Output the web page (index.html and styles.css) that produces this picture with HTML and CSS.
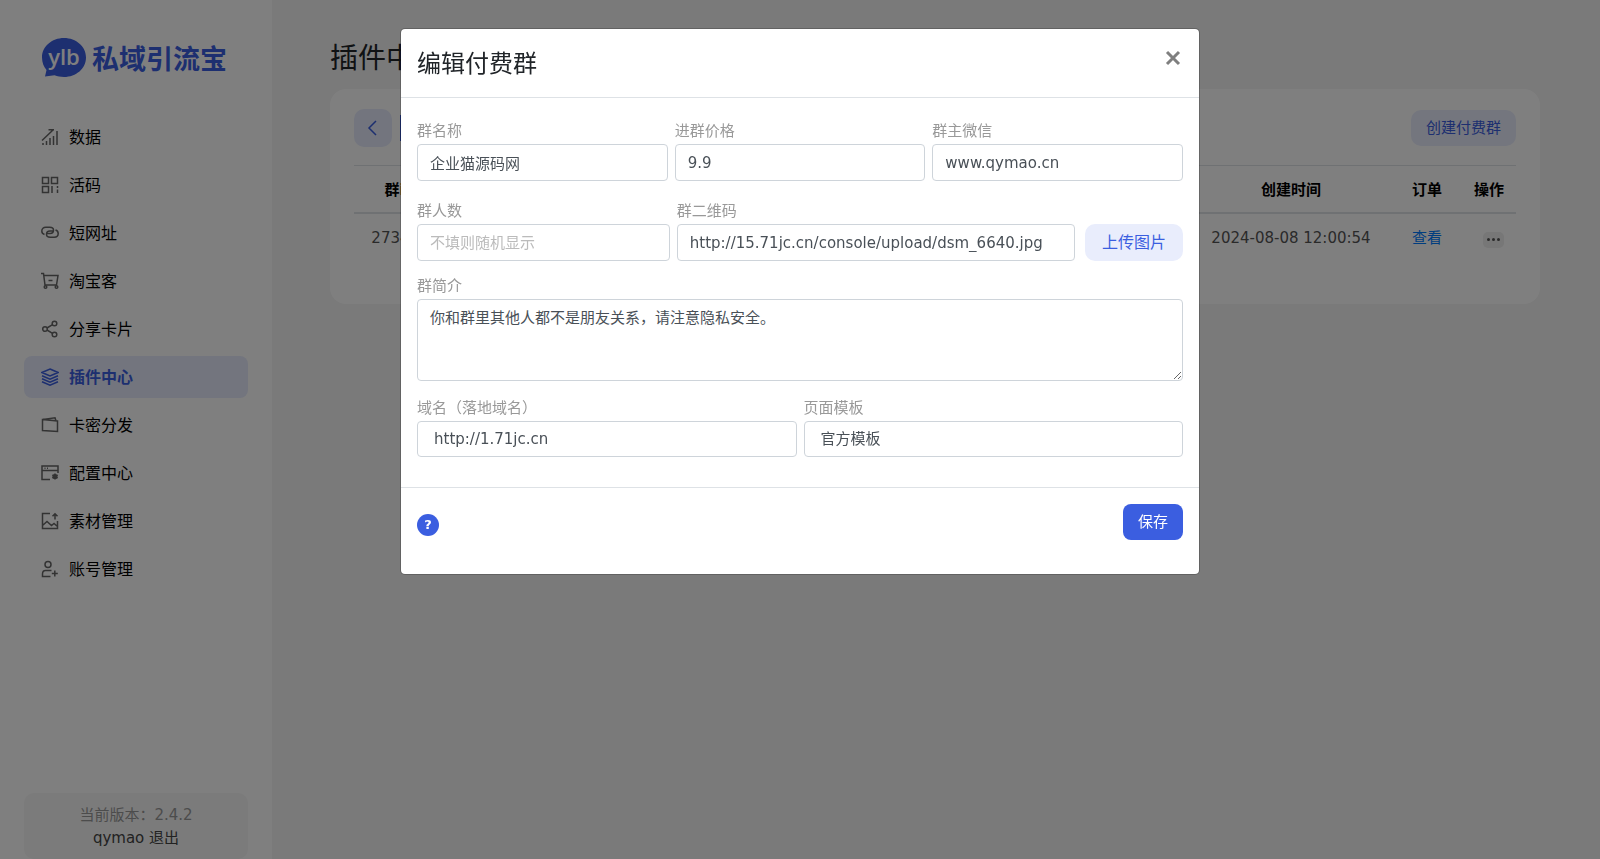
FILE: index.html
```html
<!DOCTYPE html>
<html lang="zh-CN">
<head>
  <meta charset="UTF-8">
  <meta name="viewport" content="width=device-width, initial-scale=1">
  <title>私域引流宝 - 插件中心</title>
  <link rel="stylesheet" href="styles.css">
</head>
<body>
  <div class="app">
    <!-- 左侧导航 -->
    <aside class="sidebar">
      <a class="logo" href="#">
        <svg class="logo-icon" viewBox="0 0 44 40" aria-hidden="true">
          <path d="M22 0C9.800 0 0 8.500 0 19.500c0 5.500 2 9.500 4.500 12.500L3 38.500l9.500-1.200c3 1.200 6 1.700 9.500 1.700 12.200 0 22-8.500 22-19.500S34.200 0 22 0z" fill="#3b5ee0"/>
          <text x="22" y="27" text-anchor="middle" class="logo-mark">ylb</text>
        </svg>
        <span class="logo-text">私域引流宝</span>
      </a>

      <nav class="menu">
        <a class="menu-item" href="#">
          <svg viewBox="0 0 18 18"><path d="M1 12.500 12 2M7.500 1.800H13M2 17v-2M5.500 17v-4M9 17v-7M12.500 17V8M16 17V3"/></svg>
          <span>数据</span>
        </a>
        <a class="menu-item" href="#">
          <svg viewBox="0 0 18 18"><path d="M1.500 1.500h6v6h-6zM10.500 1.500h6v6h-6zM1.500 10.500h6v6h-6zM11 10v7M16.500 10v2M16.500 13.500v3.500"/></svg>
          <span>活码</span>
        </a>
        <a class="menu-item" href="#">
          <svg viewBox="0 0 18 18"><path d="M3.500 10.500C1.800 10 .8 8.700.8 7c0-2.300 1.700-3.700 4-3.700h4c2.300 0 3.700 1.200 3.700 3S11 9.500 9 9.500H6M14.500 6c1.700.5 2.700 1.800 2.700 3.500 0 2.300-1.700 3.700-4 3.700h-4c-2.300 0-3.700-1.200-3.700-3S7 7 9 7h3"/></svg>
          <span>短网址</span>
        </a>
        <a class="menu-item" href="#">
          <svg viewBox="0 0 18 18"><path d="M0 1.500h2.500L4 13h12M3 3.500h14L15.500 13M7.500 8.500h4"/><circle cx="4.500" cy="15" r="1.300"/><circle cx="15.500" cy="15" r="1.300"/></svg>
          <span>淘宝客</span>
        </a>
        <a class="menu-item" href="#">
          <svg viewBox="0 0 18 18"><circle cx="4" cy="9" r="2.300"/><circle cx="13.500" cy="3.500" r="2.300"/><circle cx="13.500" cy="14.500" r="2.300"/><path d="m6 8 5.500-3.300M6 10l5.500 3.300"/></svg>
          <span>分享卡片</span>
        </a>
        <a class="menu-item active" href="#">
          <svg viewBox="0 0 18 18"><path d="m9 1 8 3.500L9 8 1 4.500zM1 7.700l8 3.500 8-3.500M1 10.700l8 3.500 8-3.500M1 13.700l8 3.500 8-3.500"/></svg>
          <span>插件中心</span>
        </a>
        <a class="menu-item" href="#">
          <svg viewBox="0 0 18 18"><path d="M1.500 3.500 16.500 5v10.500L1.500 14.500zM2 3.500 14 1.800l1 3"/></svg>
          <span>卡密分发</span>
        </a>
        <a class="menu-item" href="#">
          <svg viewBox="0 0 18 18"><path d="M9 15.500H1V2h16v7M1 6.500h16M3.500 4.300h1M6 4.300h1M14 9.500v6M11.400 11l5.200 3M16.600 11l-5.200 3"/><circle cx="14" cy="12.500" r="1.800"/></svg>
          <span>配置中心</span>
        </a>
        <a class="menu-item" href="#">
          <svg viewBox="0 0 18 18"><path d="M9 1.500H1.500v15h15V9M1.500 13.500l4.500-4 4.500 4 2.500-2 3.500 3M14 7.500V2M11.500 4.200 14 1.700l2.500 2.500"/></svg>
          <span>素材管理</span>
        </a>
        <a class="menu-item" href="#">
          <svg viewBox="0 0 18 18"><circle cx="7" cy="4.500" r="3"/><path d="M9.500 16.500h-8V14c0-2 1-3.500 3-3.500h6M13.800 10.500v6M10.800 13.500h6"/></svg>
          <span>账号管理</span>
        </a>
      </nav>

      <div class="account">
        <p class="version">当前版本：2.4.2</p>
        <p><a href="#">qymao</a> <a href="#">退出</a></p>
      </div>
    </aside>

    <!-- 右侧内容 -->
    <main class="content">
      <h1 class="page-title">插件中心</h1>
      <section class="card">
        <div class="card-head">
          <button class="btn-back" type="button" aria-label="返回">
            <svg viewBox="0 0 16 16"><path d="M11 1 4 8l7 7"/></svg>
          </button>
          <button class="btn-current" type="button">付费群</button>
          <button class="btn-light btn-create" type="button">创建付费群</button>
        </div>
        <table class="table">
          <colgroup>
            <col class="col-id">
            <col>
            <col class="col-time">
            <col class="col-order">
            <col class="col-action">
          </colgroup>
          <thead>
            <tr><th>群id</th><th>群名称</th><th>创建时间</th><th>订单</th><th>操作</th></tr>
          </thead>
          <tbody>
            <tr>
              <td>273466</td>
              <td>企业猫源码网</td>
              <td>2024-08-08 12:00:54</td>
              <td><a href="#">查看</a></td>
              <td class="action"><button class="btn-more" type="button" aria-label="更多"><i></i><i></i><i></i></button></td>
            </tr>
          </tbody>
        </table>
      </section>
    </main>
  </div>

  <!-- 编辑付费群 -->
  <div class="backdrop">
    <form class="modal" role="dialog" aria-labelledby="modal-title">
      <div class="modal-header">
        <h2 id="modal-title">编辑付费群</h2>
        <button class="close" type="button" aria-label="关闭">
          <svg viewBox="0 0 16 16"><path d="m2 2 12 12M14 2 2 14"/></svg>
        </button>
      </div>
      <div class="modal-body">
        <div class="row row-base">
          <div class="field">
            <label for="title">群名称</label>
            <input id="title" type="text" value="企业猫源码网">
          </div>
          <div class="field">
            <label for="price">进群价格</label>
            <input id="price" type="text" value="9.9">
          </div>
          <div class="field">
            <label for="wechat">群主微信</label>
            <input id="wechat" type="text" value="www.qymao.cn">
          </div>
        </div>
        <div class="row row-qrcode">
          <div class="field field-num">
            <label for="num">群人数</label>
            <input id="num" type="text" placeholder="不填则随机显示">
          </div>
          <div class="field">
            <label for="qrcode">群二维码</label>
            <input id="qrcode" type="text" value="http://15.71jc.cn/console/upload/dsm_6640.jpg">
          </div>
          <button class="btn-light btn-upload" type="button">上传图片</button>
        </div>
        <div class="row row-desc">
          <div class="field">
            <label for="desc">群简介</label>
            <textarea id="desc">你和群里其他人都不是朋友关系，请注意隐私安全。</textarea>
          </div>
        </div>
        <div class="row">
          <div class="field">
            <label for="domain">域名（落地域名）</label>
            <select id="domain"><option>http://1.71jc.cn</option></select>
          </div>
          <div class="field">
            <label for="tpl">页面模板</label>
            <select id="tpl"><option>官方模板</option></select>
          </div>
        </div>
      </div>
      <div class="modal-footer">
        <a class="help" href="#" aria-label="帮助">?</a>
        <button class="btn-save" type="submit">保存</button>
      </div>
    </form>
  </div>
</body>
</html>
```
FILE: styles.css
```css
* {
  margin: 0;
  padding: 0;
  box-sizing: border-box;
}

body {
  font-family: Verdana, "DejaVu Sans", "Noto Sans CJK SC", sans-serif;
  font-size: 15px;
  line-height: 22px;
  color: #212529;
  background: #f4f4f4;
  overflow: hidden;
}

a {
  text-decoration: none;
}

button,
input,
select,
textarea {
  font: inherit;
}

button {
  border: none;
  cursor: pointer;
}

svg {
  fill: none;
  stroke: currentColor;
}

.app {
  display: flex;
  height: 100vh;
}

/* sidebar */
.sidebar {
  display: flex;
  flex-direction: column;
  width: 272px;
  flex-shrink: 0;
  padding: 38px 24px 0;
  background: #fff;
}

.logo {
  display: flex;
  align-items: center;
  gap: 6px;
  height: 40px;
  margin-left: 18px;
  color: #3b5ee0;
}

.logo-icon {
  width: 44px;
  height: 40px;
  stroke: none;
}

.logo-mark {
  fill: #fff;
  font-family: "Open Sans", sans-serif;
  font-size: 22px;
  font-weight: 600;
}

.logo-text {
  font-family: "Noto Sans CJK SC", sans-serif;
  font-size: 27px;
  font-weight: bold;
  white-space: nowrap;
}

.menu {
  display: flex;
  flex-direction: column;
  gap: 6px;
  margin-top: 38px;
}

.menu-item {
  display: flex;
  align-items: center;
  gap: 10px;
  height: 42px;
  padding: 0 17px;
  border-radius: 8px;
  font-size: 16px;
  line-height: 24px;
  color: #000;
}

.menu-item span {
  padding-top: 2px;
}

.menu-item svg {
  width: 18px;
  height: 18px;
  color: #666;
  stroke-width: 1.5;
}

.menu-item.active {
  background: #e6ebfc;
  color: #3b5ee0;
  font-weight: bold;
}

.menu-item.active svg {
  color: #3b5ee0;
}

.account {
  margin-top: auto;
  padding: 11px 0 9px;
  border-radius: 10px;
  background: #f6f6f6;
  text-align: center;
  line-height: 23px;
}

.account a {
  color: #444;
}

.version {
  color: #999;
}

/* content */
.content {
  flex: 1;
  padding: 39px 60px 0 58px;
}

.page-title {
  font-size: 28px;
  font-weight: normal;
  line-height: 40px;
}

.card {
  margin-top: 10px;
  padding: 20px 24px 42px;
  border-radius: 16px;
  background: #fff;
}

.card-head {
  display: flex;
  align-items: center;
  gap: 8px;
  margin-bottom: 18px;
}

.btn-back {
  display: flex;
  align-items: center;
  justify-content: center;
  width: 38px;
  height: 38px;
  border-radius: 10px;
  background: #e6ebfc;
  color: #3b5ee0;
}

.btn-back svg {
  width: 16px;
  height: 16px;
  stroke-width: 1.5;
}

.btn-current {
  height: 26px;
  padding: 0 10px;
  background: #3b5ee0;
  color: #fff;
}

.btn-light {
  border-radius: 10px;
  background: #e9edfc;
  color: #3b5ee0;
}

.btn-create {
  height: 36px;
  margin-left: auto;
  padding: 0 15px;
}

.table {
  width: 100%;
  table-layout: fixed;
  border-collapse: collapse;
  text-align: center;
}

.table th {
  height: 47px;
  padding-top: 2px;
  border-top: 1px solid #dee2e6;
  border-bottom: 2px solid #dee2e6;
  color: #000;
}

.table td {
  height: 49px;
  color: #555;
}

.table td a {
  color: #007bff;
}

.col-id {
  width: 92px;
}

.col-time {
  width: 202px;
}

.col-order {
  width: 70px;
}

.col-action {
  width: 54px;
}

.table .action {
  padding: 4px 12px 0 0;
}

.btn-more {
  display: flex;
  align-items: center;
  justify-content: center;
  gap: 2px;
  width: 21px;
  height: 16px;
  margin-left: auto;
  border-radius: 5px;
  background: #eee;
}

.btn-more i {
  width: 3px;
  height: 3px;
  border-radius: 50%;
  background: #555;
}

/* modal */
.backdrop {
  position: fixed;
  inset: 0;
  padding: 28px 16px;
  background: rgba(0, 0, 0, 0.5);
}

.modal {
  width: 100%;
  max-width: 800px;
  margin: 0 auto;
  border: 1px solid rgba(0, 0, 0, 0.2);
  border-radius: 5px;
  background: #fff;
  background-clip: padding-box;
}

.modal-header {
  display: flex;
  align-items: flex-start;
  justify-content: space-between;
  padding: 17px 16px 15px;
  border-bottom: 1px solid #dee2e6;
}

.modal-header h2 {
  font-size: 24px;
  font-weight: normal;
  line-height: 36px;
}

.close {
  display: flex;
  padding: 4px 2px;
  background: none;
  color: #7f7f7f;
}

.close svg {
  width: 16px;
  height: 16px;
  stroke-width: 3;
}

.modal-body {
  padding: 22px 16px 30px;
}

.row {
  display: flex;
  align-items: flex-end;
  gap: 7px;
}

.row-base {
  margin-bottom: 19px;
}

.row-qrcode {
  margin-bottom: 14px;
}

.row-desc {
  margin-bottom: 16px;
}

.field {
  flex: 1;
  min-width: 0;
}

.field-num {
  flex: 0 0 33%;
}

.field label {
  display: block;
  margin-bottom: 2px;
  color: #999;
}

.field input,
.field select,
.field textarea {
  display: block;
  width: 100%;
  height: 37px;
  padding: 0 12px;
  border: 1px solid #ced4da;
  border-radius: 4px;
  background: #fff;
  color: #495057;
}

.field input::placeholder {
  color: #bbb;
}

.field textarea {
  height: 82px;
  padding: 7px 12px;
  resize: vertical;
}

.field select {
  height: 36px;
  padding: 0 16px;
  appearance: none;
}

.btn-upload {
  height: 37px;
  margin-left: 3px;
  padding: 0 17px;
  font-size: 16px;
}

.modal-footer {
  display: flex;
  align-items: center;
  justify-content: space-between;
  padding: 16px 16px 34px;
  border-top: 1px solid #dee2e6;
}

.help {
  width: 22px;
  height: 22px;
  margin-top: 5px;
  border-radius: 50%;
  background: #3b5ee0;
  color: #fff;
  font-size: 13px;
  font-weight: bold;
  text-align: center;
}

.btn-save {
  height: 36px;
  padding: 0 15px;
  border-radius: 8px;
  background: #3b5ee0;
  color: #fff;
}
```
